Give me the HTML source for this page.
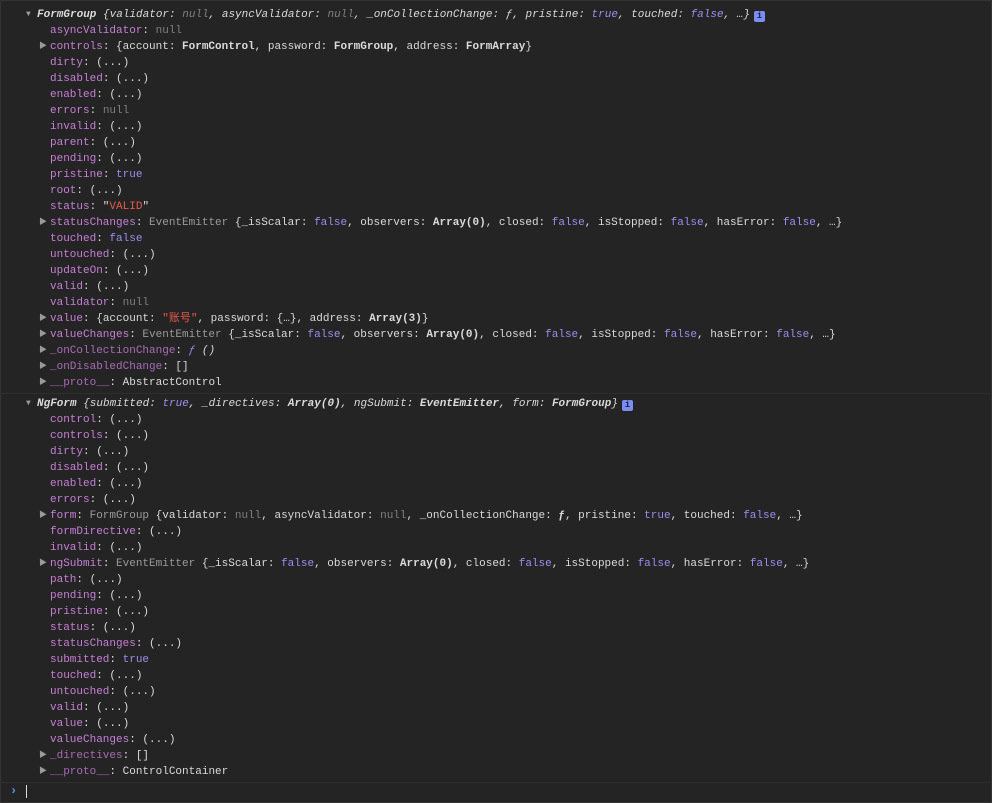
<!DOCTYPE html>
<html><head><meta charset="utf-8"><style>
html,body{margin:0;padding:0;background:#242424;width:992px;height:803px;overflow:hidden}
body{font-family:"Liberation Mono","Noto Sans CJK SC",monospace;font-size:11px;color:#dadada;border:1px solid #333;box-sizing:border-box}
.msg{position:absolute;left:0;width:990px}
.l{height:16px;line-height:16px;white-space:pre;position:relative}
.h{padding-left:37px;font-style:italic}
.c{padding-left:50px}
.k{color:#c77fd6}
.nk{color:#a86bb5}
.n{color:#7f7f7f}
.b{color:#9d8cf0}
.s{color:#e8594a}
.g{color:#9a9a9a}
.bold{font-weight:bold}
.ar{position:absolute;font-size:8px;color:#9a9a9a;font-style:normal}
.c .ar{left:39px}
.h .ar{left:26px}
.info{display:inline-block;width:11px;height:11px;background:#7a8df0;color:#1f1f50;font-size:9px;line-height:11px;text-align:center;border-radius:2px;font-style:normal;font-weight:bold;vertical-align:-1px;margin-left:4px}
.sep{position:absolute;left:0;width:990px;height:1px;background:#2e2e2e}
</style></head><body>
<div class="msg" style="top:7px">
<div class="l h"><span class="ar">▼</span><b>FormGroup</b> {<span>validator</span>: <span class="n">null</span>, asyncValidator: <span class="n">null</span>, _onCollectionChange: <span>ƒ</span>, pristine: <span class="b">true</span>, touched: <span class="b">false</span>, …}<span class="info">i</span></div>
<div class="l c"><span class="k">asyncValidator</span>: <span class="n">null</span></div>
<div class="l c"><span class="ar">▶</span><span class="k">controls</span>: {account: <span class="bold">FormControl</span>, password: <span class="bold">FormGroup</span>, address: <span class="bold">FormArray</span>}</div>
<div class="l c"><span class="k">dirty</span>: (...)</div>
<div class="l c"><span class="k">disabled</span>: (...)</div>
<div class="l c"><span class="k">enabled</span>: (...)</div>
<div class="l c"><span class="k">errors</span>: <span class="n">null</span></div>
<div class="l c"><span class="k">invalid</span>: (...)</div>
<div class="l c"><span class="k">parent</span>: (...)</div>
<div class="l c"><span class="k">pending</span>: (...)</div>
<div class="l c"><span class="k">pristine</span>: <span class="b">true</span></div>
<div class="l c"><span class="k">root</span>: (...)</div>
<div class="l c"><span class="k">status</span>: "<span class="s">VALID</span>"</div>
<div class="l c"><span class="ar">▶</span><span class="k">statusChanges</span>: <span class="g">EventEmitter</span> {_isScalar: <span class="b">false</span>, observers: <span class="bold">Array(0)</span>, closed: <span class="b">false</span>, isStopped: <span class="b">false</span>, hasError: <span class="b">false</span>, …}</div>
<div class="l c"><span class="k">touched</span>: <span class="b">false</span></div>
<div class="l c"><span class="k">untouched</span>: (...)</div>
<div class="l c"><span class="k">updateOn</span>: (...)</div>
<div class="l c"><span class="k">valid</span>: (...)</div>
<div class="l c"><span class="k">validator</span>: <span class="n">null</span></div>
<div class="l c"><span class="ar">▶</span><span class="k">value</span>: {account: <span class="s">"账号"</span>, password: {…}, address: <span class="bold">Array(3)</span>}</div>
<div class="l c"><span class="ar">▶</span><span class="k">valueChanges</span>: <span class="g">EventEmitter</span> {_isScalar: <span class="b">false</span>, observers: <span class="bold">Array(0)</span>, closed: <span class="b">false</span>, isStopped: <span class="b">false</span>, hasError: <span class="b">false</span>, …}</div>
<div class="l c"><span class="ar">▶</span><span class="nk">_onCollectionChange</span>: <i class="b">ƒ</i> <i>()</i></div>
<div class="l c"><span class="ar">▶</span><span class="nk">_onDisabledChange</span>: []</div>
<div class="l c"><span class="ar">▶</span><span class="nk">__proto__</span>: AbstractControl</div>
</div>
<div class="sep" style="top:393px"></div>
<div class="msg" style="top:396px">
<div class="l h"><span class="ar">▼</span><b>NgForm</b> {submitted: <span class="b">true</span>, _directives: <b>Array(0)</b>, ngSubmit: <b>EventEmitter</b>, form: <b>FormGroup</b>}<span class="info">i</span></div>
<div class="l c"><span class="k">control</span>: (...)</div>
<div class="l c"><span class="k">controls</span>: (...)</div>
<div class="l c"><span class="k">dirty</span>: (...)</div>
<div class="l c"><span class="k">disabled</span>: (...)</div>
<div class="l c"><span class="k">enabled</span>: (...)</div>
<div class="l c"><span class="k">errors</span>: (...)</div>
<div class="l c"><span class="ar">▶</span><span class="k">form</span>: <span class="g">FormGroup</span> {validator: <span class="n">null</span>, asyncValidator: <span class="n">null</span>, _onCollectionChange: <b>ƒ</b>, pristine: <span class="b">true</span>, touched: <span class="b">false</span>, …}</div>
<div class="l c"><span class="k">formDirective</span>: (...)</div>
<div class="l c"><span class="k">invalid</span>: (...)</div>
<div class="l c"><span class="ar">▶</span><span class="k">ngSubmit</span>: <span class="g">EventEmitter</span> {_isScalar: <span class="b">false</span>, observers: <span class="bold">Array(0)</span>, closed: <span class="b">false</span>, isStopped: <span class="b">false</span>, hasError: <span class="b">false</span>, …}</div>
<div class="l c"><span class="k">path</span>: (...)</div>
<div class="l c"><span class="k">pending</span>: (...)</div>
<div class="l c"><span class="k">pristine</span>: (...)</div>
<div class="l c"><span class="k">status</span>: (...)</div>
<div class="l c"><span class="k">statusChanges</span>: (...)</div>
<div class="l c"><span class="k">submitted</span>: <span class="b">true</span></div>
<div class="l c"><span class="k">touched</span>: (...)</div>
<div class="l c"><span class="k">untouched</span>: (...)</div>
<div class="l c"><span class="k">valid</span>: (...)</div>
<div class="l c"><span class="k">value</span>: (...)</div>
<div class="l c"><span class="k">valueChanges</span>: (...)</div>
<div class="l c"><span class="ar">▶</span><span class="nk">_directives</span>: []</div>
<div class="l c"><span class="ar">▶</span><span class="nk">__proto__</span>: ControlContainer</div>
</div>
<div class="sep" style="top:782px"></div>
<div style="position:absolute;top:783px;left:10px;height:16px;line-height:16px;color:#4d9ef0;font-size:12px;font-weight:bold">›</div>
<div style="position:absolute;top:785px;left:26px;width:1px;height:13px;background:#ddd"></div>
</body></html>
